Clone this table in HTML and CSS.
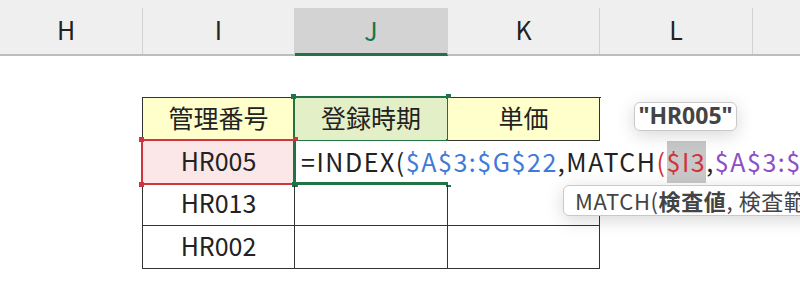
FILE: index.html
```html
<html>

<head>
    <title>管理番号</title>
    <link rel="stylesheet" href="styles.css">
</head>

<body>

    <div class="colbar">
        <div class="colhead first">H</div>
        <div class="colhead narrow">I</div>
        <div class="colhead wide active">J</div>
        <div class="colhead narrow">K</div>
        <div class="colhead wide">L</div>
        <div class="colhead rest"></div>
    </div>

    <div class="sheet">
        <div class="grid">
            <div class="cell head">管理番号</div>
            <div class="cell head picked">登録時期
                <div class="frame green-frame"><i class="dot tl"></i><i class="dot tr"></i><i class="dot bl"></i><i class="dot br"></i></div>
            </div>
            <div class="cell head">単価</div>

            <div class="cell ref">HR005
                <div class="frame red-frame"><i class="dot tl"></i><i class="dot tr"></i><i class="dot bl"></i><i class="dot br"></i></div>
            </div>
            <div class="cell current">
                <div class="editor">=INDEX(<span class="c-blue">$A$3:$G$22</span>,MATCH<span class="c-red">(</span><span class="c-red hl">$I3</span>,<span class="c-purple">$A$3:$A$22,0),6)</span></div>
                <i class="dot bl green"></i><i class="dot br green"></i>
            </div>
            <div class="cell"></div>

            <div class="cell">HR013</div>
            <div class="cell"></div>
            <div class="cell"></div>

            <div class="cell">HR002</div>
            <div class="cell"></div>
            <div class="cell"></div>
        </div>

        <div class="tip value-tip">"HR005"</div>
        <div class="tip args-tip">MATCH(<b>検査値</b>, 検査範囲, [照合の種類])</div>
    </div>

</body>

</html>
```

FILE: styles.css
```css
body {
    margin: 0;
    width: 800px;
    height: 305px;
    overflow: hidden;
    background-color: white;
    font-family: "Noto Sans CJK JP", "Noto Sans", sans-serif;
    color: #222;
}

/* column letters */
.colbar {
    display: flex;
    padding-top: 8px;
    height: 56px;
    box-sizing: border-box;
    background-color: #efefef;
    border-bottom: 2px solid #bdbdbd;
}

.colhead {
    box-sizing: border-box;
    height: 46px;
    border-right: 1px solid #d2d2d2;
    display: flex;
    align-items: center;
    justify-content: center;
    padding-bottom: 4px;
    font-size: 25px;
    color: #222;
}

.first { width: 143px; padding-right: 10px; }
.narrow { width: 152px; }
.wide { width: 153px; }
.rest { flex: 1; border-right: none; }

.colhead.active {
    background-color: #d3d3d3;
    color: #217346;
    border-bottom: 3px solid #217346;
    height: 48px;
    padding-bottom: 2px;
    margin-bottom: -2px;
}

/* cells */
.sheet {
    position: relative;
    height: 249px;
    padding-top: 41px;
    box-sizing: border-box;
}

.grid {
    display: grid;
    grid-template-columns: 152px 153px 152px;
    grid-template-rows: 43px 43px 42px 43px;
    margin-left: 142px;
    width: 458px;
    border-top: 1px solid #333;
    border-left: 1px solid #333;
}

.cell {
    position: relative;
    box-sizing: border-box;
    border-right: 1px solid #333;
    border-bottom: 1px solid #333;
    display: flex;
    align-items: center;
    justify-content: center;
    font-size: 25px;
    padding-bottom: 5px;
}

.head {
    background-color: #ffffcc;
}

.head.picked {
    background-color: #e3efc6;
}

.ref {
    background-color: #fbe6e8;
}

/* reference frames */
.frame {
    position: absolute;
    left: -2px;
    top: -2px;
    right: -2px;
    bottom: -2px;
    border: 2px solid;
}

.green-frame { border-color: #217346; }
.red-frame { border-color: #d0343f; }

.dot {
    position: absolute;
    width: 5px;
    height: 5px;
}

.green-frame .dot, .dot.green { background-color: #217346; }
.red-frame .dot { background-color: #d0343f; }

.tl { left: -4px; top: -4px; }
.tr { right: -4px; top: -4px; }
.bl { left: -4px; bottom: -4px; }
.br { right: -4px; bottom: -4px; }

.current .dot.bl { left: -3px; bottom: -4px; }
.current .dot.br { right: -4px; bottom: -4px; }

/* in-cell editor */
.editor {
    position: absolute;
    left: -2px;
    top: 0;
    bottom: -2px;
    width: 520px;
    box-sizing: border-box;
    padding-left: 5px;
    padding-bottom: 4px;
    background-color: white;
    border-left: 3px solid #217346;
    display: flex;
    align-items: center;
    white-space: nowrap;
    font-size: 25px;
    letter-spacing: 1.55px;
    color: #222;
    z-index: 1;
}

.editor::after {
    content: "";
    position: absolute;
    left: -3px;
    bottom: 0;
    width: 155px;
    height: 3px;
    background-color: #217346;
}

.c-blue { color: #3f7bd6; }
.c-red { color: #d2323c; }
.c-purple { color: #8e4ec6; }

.hl {
    background-color: #c8c8c8;
    align-self: stretch;
    display: flex;
    align-items: center;
    margin-bottom: -2px;
    padding-bottom: 2px;
}

/* hover tips */
.tip {
    position: absolute;
    z-index: 2;
    background-color: white;
    border: 1.5px solid #c9c9c9;
    border-radius: 6px;
    box-shadow: 0 4px 18px rgba(0, 0, 0, 0.16);
    white-space: nowrap;
    color: #444;
}

.value-tip {
    left: 634px;
    top: 46px;
    width: 103px;
    height: 29px;
    box-sizing: border-box;
    text-align: center;
    font-family: "Noto Sans", sans-serif;
    font-weight: bold;
    font-size: 23px;
    line-height: 25px;
}

.args-tip {
    left: 563px;
    top: 129px;
    height: 31px;
    box-sizing: border-box;
    padding-left: 11px;
    padding-right: 10px;
    font-size: 22px;
    letter-spacing: 0.6px;
    line-height: 28px;
}

.args-tip b {
    font-weight: bold;
}
```
